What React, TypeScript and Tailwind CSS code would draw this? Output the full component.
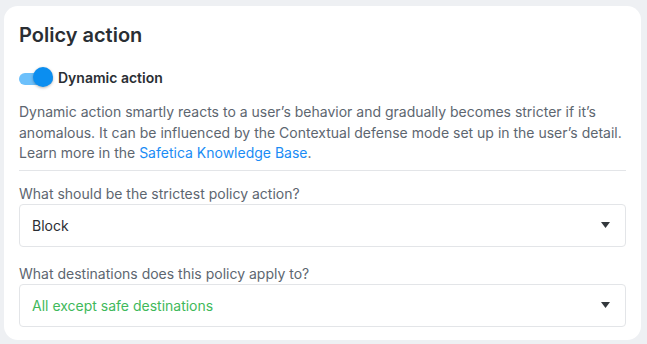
import { useState } from "react";

function Toggle({ on, onChange }: { on: boolean; onChange: (v: boolean) => void }) {
  return (
    <button
      type="button"
      onClick={() => onChange(!on)}
      className="relative h-5 w-[35px] shrink-0"
    >
      <span
        className={`absolute left-0 top-[6px] h-[12px] w-[34px] rounded-full ${
          on ? "bg-[#6cc0fb]" : "bg-[#c5cbd1]"
        }`}
      />
      <span
        className={`absolute top-0 h-5 w-5 rounded-full shadow-[0_1px_3px_rgba(0,0,0,0.3)] ${
          on ? "left-[14px] bg-[#0b8ef0]" : "left-0 bg-white"
        }`}
      />
    </button>
  );
}

function Caret() {
  return (
    <svg width="9" height="6" viewBox="0 0 9 6" className="shrink-0">
      <path d="M0 0 H9 L4.5 6 Z" fill="#33383d" />
    </svg>
  );
}

function SelectBox({ value, className }: { value: string; className: string }) {
  return (
    <div className="flex h-[43px] items-center justify-between rounded-[4px] border border-[#e3e5e8] bg-white pl-3 pr-[15px]">
      <span className={`text-[14px] ${className}`}>{value}</span>
      <Caret />
    </div>
  );
}

export default function App() {
  const [dynamic, setDynamic] = useState(true);

  return (
    <div
      className="min-h-[344px] w-[647px] bg-[#eef0f3] pl-[4px] pr-[6px] pt-[6px] pb-[4px]"
      style={{ fontFamily: "Inter, 'Noto Sans', sans-serif" }}
    >
      <div className="rounded-[14px] bg-white px-[15px] pt-[15px] pb-[13px]">
        <h2 className="text-[20px] leading-[28px] font-semibold text-[#2a2e33]">Policy action</h2>

        <div className="mt-[18px] flex h-5 items-center gap-[4px]">
          <Toggle on={dynamic} onChange={setDynamic} />
          <span className="text-[14px] font-semibold text-[#2a2e33]">Dynamic action</span>
        </div>

        <p className="mt-[15px] text-[14px] leading-[20.5px] text-[#5d6670]">
          Dynamic action smartly reacts to a user’s behavior and gradually becomes stricter if it’s
          <br />
          anomalous. It can be influenced by the Contextual defense mode set up in the user’s detail.
          <br />
          Learn more in the <span className="text-[#1a8cf5]">Safetica Knowledge Base</span>.
        </p>

        <div className="mt-[6px] h-px bg-[#e3e5e8]" />

        <div className="mt-[13px] text-[14px] leading-[20px] text-[#5d6670]">
          What should be the strictest policy action?
        </div>
        <SelectBox value="Block" className="text-[#2a2e33]" />

        <div className="mt-[17px] text-[14px] leading-[20px] text-[#5d6670]">
          What destinations does this policy apply to?
        </div>
        <SelectBox value="All except safe destinations" className="text-[#3fb95b]" />
      </div>
    </div>
  );
}
